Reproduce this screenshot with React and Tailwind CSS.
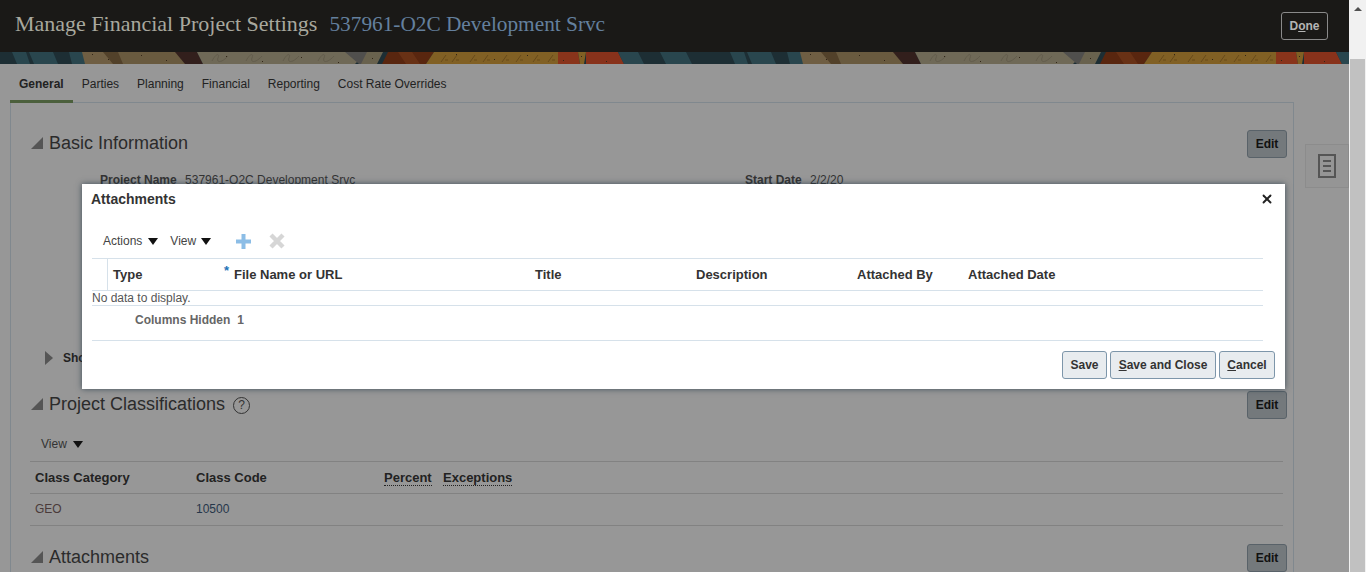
import { X } from "lucide-react";

const SANS = "font-['Liberation_Sans',Arial,sans-serif]";

function Caret({ className = "" }) {
  return (
    <svg width="10" height="7" viewBox="0 0 10 7" className={className}>
      <path d="M0 0h10L5 7z" fill="#111" />
    </svg>
  );
}

function Disclosure({ className = "" }) {
  return (
    <svg width="12" height="12" viewBox="0 0 12 12" className={className}>
      <path d="M0 12L12 0v12z" fill="#555" />
    </svg>
  );
}

// one repeat of the artwork strip, 718px wide
function BannerTile() {
  const squiggles = [212, 246, 283, 318];
  const slashes = [441, 452, 470, 483, 502, 516, 533, 548];
  const specks = [92, 108, 141, 166, 226, 262, 301, 338, 372, 456, 494, 527, 563, 581, 606];
  return (
    <>
      <rect width="718" height="12" fill="#21353c" />
      <path d="M12 0h14l4 12H17zM29 0h24l5 12H34zM69 0h20l-4 12H72z" fill="#2f5059" />
      <path d="M82 0h36l10 12H85z" fill="#7f6c4d" />
      <path d="M103 0h32l-6 12h-16z" fill="#5e4a30" />
      <path d="M118 0h60l10 12h-65z" fill="#786748" />
      <path d="M175 0h22l6 12h-18z" fill="#3a2420" />
      <path d="M197 0h170l-12 12H203z" fill="#7f7864" />
      <path d="M345 0h22l8 12h-16z" fill="#5c5a58" />
      <path d="M367 0h16l-6 12h-16z" fill="#787059" />
      <path d="M388 0h46l-8 12h-44z" fill="#662c12" />
      <path d="M398 0h14l8 12h-14z" fill="#773819" />
      <path d="M434 0h132l4 12H426z" fill="#936e29" />
      <path d="M558 0h20l2 12h-22z" fill="#9c3c1f" />
      <path d="M578 0h8l-2 12h-4z" fill="#936e29" />
      <path d="M586 0h32l6 12h-38z" fill="#9b391f" />
      <path d="M618 0h20l6 12h-20zM660 0h26l6 12h-26z" fill="#2f5059" />
      {squiggles.map((x) => (
        <path key={x} d={`M${x} 9c4-8 8-8 6-3s4 5 10-2`} fill="none" stroke="#716a57" strokeWidth="1" />
      ))}
      {slashes.map((x) => (
        <path key={x} d={`M${x} 10l5-7M${x + 4} 8h3`} fill="none" stroke="#77551f" strokeWidth="1" />
      ))}
      {specks.map((x, i) => (
        <rect key={x} x={x} y={2 + (i * 5) % 9} width="1" height="1" fill="#3a2c1c" />
      ))}
    </>
  );
}

function Banner() {
  return (
    <svg width="1349" height="12" viewBox="0 0 1349 12" className="block">
      <g transform="translate(0 0)"><BannerTile /></g>
      <g transform="translate(718 0)"><BannerTile /></g>
      <rect width="1349" height="12" fill="#000" fillOpacity="0.12" />
    </svg>
  );
}

function EditButton() {
  return (
    <button className="h-[28px] w-[40px] rounded-[3px] border border-[#596269] bg-[#74797c] text-[12px] font-bold text-[#111]">
      Edit
    </button>
  );
}

function SectionTitle({ children }) {
  return (
    <div className="ml-[1px] flex items-center gap-[6px] pb-[2px] text-[18px] leading-[22px] text-[#2b2b2b]">
      <Disclosure />
      {children}
    </div>
  );
}

function DialogButton({ children, className = "" }) {
  return (
    <button className={`h-[28px] rounded-[3px] border border-[#7d96aa] bg-[#e8ecef] text-[12px] font-bold text-[#333] ${className}`}>
      {children}
    </button>
  );
}

function AttachmentsDialog() {
  return (
    <div className="absolute left-[82px] top-[184px] z-20 flex h-[205px] w-[1203px] flex-col bg-white shadow-[0_0_6px_rgba(40,60,75,0.8)]">
      <div className="flex h-[30px] items-center justify-between pl-[9px] pr-[11px]">
        <span className="text-[14px] font-bold text-[#333]">Attachments</span>
        <X size={14} strokeWidth={3.2} className="text-[#222]" />
      </div>
      <div className="flex h-[44px] items-center pl-[21px] pt-[10px] text-[12px] text-[#444]">
        <span>Actions</span>
        <Caret className="ml-[6px]" />
        <span className="ml-[12px]">View</span>
        <Caret className="ml-[5px]" />
        <svg width="15" height="15" viewBox="0 0 15 15" className="ml-[25px]">
          <path d="M5.5 0h4v5.5H15v4H9.5V15h-4V9.5H0v-4h5.5z" fill="#8cbde6" />
        </svg>
        <svg width="16" height="16" viewBox="0 0 16 16" className="ml-[18px]">
          <path d="M2 2l12 12M14 2L2 14" stroke="#d6d6d6" strokeWidth="4.4" />
        </svg>
      </div>
      <div className="ml-[10px] mr-[22px]">
        <div className="flex h-[33px] items-center border-y border-[#d6e1ea] text-[13px] font-bold text-[#333]">
          <div className="h-full w-[16px] border-r border-[#d6e1ea]" />
          <div className="w-[116px] pl-[5px]">Type</div>
          <div className="flex w-[311px]">
            <span className="w-[10px] -translate-y-[1px] text-[13px] leading-none text-[#1f73b7]">*</span>
            File Name or URL
          </div>
          <div className="w-[161px]">Title</div>
          <div className="w-[161px]">Description</div>
          <div className="w-[111px]">Attached By</div>
          <div>Attached Date</div>
        </div>
        <div className="flex h-[15px] items-center border-b border-[#d6e1ea] text-[12px] text-[#555]">No data to display.</div>
        <div className="flex h-[35px] items-center border-b border-[#d6e1ea] pb-[6px] pl-[43px] text-[12px] text-[#666]">
          <span className="font-bold">Columns Hidden</span>
          <span className="ml-[7px] font-bold">1</span>
        </div>
      </div>
      <div className="mt-[10px] flex justify-end gap-[3px] pr-[10px]">
        <DialogButton className="w-[45px]">Save</DialogButton>
        <DialogButton className="w-[106px]"><u>S</u>ave and Close</DialogButton>
        <DialogButton className="w-[56px]"><u>C</u>ancel</DialogButton>
      </div>
    </div>
  );
}

function Scrollbar() {
  return (
    <div className="flex w-[17px] shrink-0 flex-col bg-[#f1f1f1]">
      <div className="flex h-[17px] items-center justify-center">
        <svg width="8" height="4" viewBox="0 0 8 4"><path d="M0 4L4 0l4 4z" fill="#505050" /></svg>
      </div>
      <div className="ml-[1px] mt-[42px] w-[15px] flex-1 bg-[#c1c1c1]" />
    </div>
  );
}

export default function App() {
  return (
    <div className={`relative flex h-[572px] w-[1366px] overflow-hidden bg-white ${SANS}`}>
      <div className="relative h-full w-[1349px] overflow-hidden bg-[#979797]">
        <div className="flex h-[52px] items-center justify-between bg-[#1a1917] pl-[15px] pr-[21px]">
          <div className="flex items-baseline gap-[12px] pb-[5px] font-['Liberation_Serif',Georgia,serif]">
            <span className="text-[22px] text-[#a8a89e]">Manage Financial Project Settings</span>
            <span className="text-[21.3px] text-[#64809e]">537961-O2C Development Srvc</span>
          </div>
          <button className="h-[28px] w-[47px] rounded-[3px] border border-[#8a8a8a] text-[12px] font-bold text-[#b5b5b5]">
            D<u>o</u>ne
          </button>
        </div>
        <Banner />

        <div className="flex h-[39px] gap-[18px] pl-[10px] text-[12px] text-[#222]">
          <div className="border-b-[3px] border-[#4b5f3c] px-[9px] pt-[11px] font-bold">General</div>
          <div className="-ml-[9px] pt-[11px]">Parties</div>
          <div className="pt-[11px]">Planning</div>
          <div className="pt-[11px]">Financial</div>
          <div className="pt-[11px]">Reporting</div>
          <div className="pt-[11px]">Cost Rate Overrides</div>
        </div>

        <div className="-mt-[1px] ml-[10px] flex w-[1284px] flex-col border border-[#80888e] pl-[19px] pr-[6px]">
          <div className="mt-[27px] flex h-[28px] items-center justify-between">
            <SectionTitle>Basic Information</SectionTitle>
            <EditButton />
          </div>
          <div className="mt-[13px] flex h-[180px] text-[12px] font-bold text-[#333]">
            <div className="ml-[70px] w-[645px]">Project Name <span className="ml-[5px] font-normal">537961-O2C Development Srvc</span></div>
            <div>Start Date <span className="ml-[5px] font-normal">2/2/20</span></div>
          </div>
          <div className="flex h-[14px] items-center gap-[10px] pl-[15px] text-[12px] font-bold text-[#222]">
            <svg width="8" height="14" viewBox="0 0 8 14"><path d="M0 0l8 7-8 7z" fill="#555" /></svg>
            Show
          </div>
          <div className="mt-[26px] flex h-[28px] items-center justify-between">
            <div className="flex items-center gap-[6px]">
              <SectionTitle>Project Classifications</SectionTitle>
              <span className="ml-[2px] flex h-[17px] w-[17px] items-center justify-center rounded-full border border-[#333] text-[12px] text-[#333]">?</span>
            </div>
            <EditButton />
          </div>
          <div className="flex h-[42px] items-center pl-[11px] pt-[8px] text-[12px] text-[#333]">
            View
            <Caret className="ml-[6px]" />
          </div>
          <div className="mr-[4px] flex h-[33px] items-center border-y border-[#828282] pl-[5px] text-[13px] font-bold text-[#222]">
            <div className="w-[161px]">Class Category</div>
            <div className="w-[188px]">Class Code</div>
            <div className="w-[59px]"><span className="border-b border-dotted border-[#222]">Percent</span></div>
            <div><span className="border-b border-dotted border-[#222]">Exceptions</span></div>
          </div>
          <div className="mr-[4px] flex h-[32px] items-center border-b border-[#828282] pb-[2px] pl-[5px] text-[12px] text-[#4a3a3a]">
            <div className="w-[161px]">GEO</div>
            <div className="text-[#26364a]">10500</div>
          </div>
          <div className="mt-[18px] flex h-[28px] items-center justify-between">
            <SectionTitle>Attachments</SectionTitle>
            <EditButton />
          </div>
        </div>

        <div className="absolute left-[1305px] top-[144px] flex h-[44px] w-[44px] items-center justify-center border border-[#8c8c8c] bg-[#959595]">
          <svg width="18" height="24" viewBox="0 0 18 24" fill="none" stroke="#555" strokeWidth="2">
            <rect x="1" y="1" width="16" height="22" />
            <path d="M5 7h8M5 12h8M5 17h8" />
          </svg>
        </div>
        <AttachmentsDialog />
      </div>
      <Scrollbar />
    </div>
  );
}
